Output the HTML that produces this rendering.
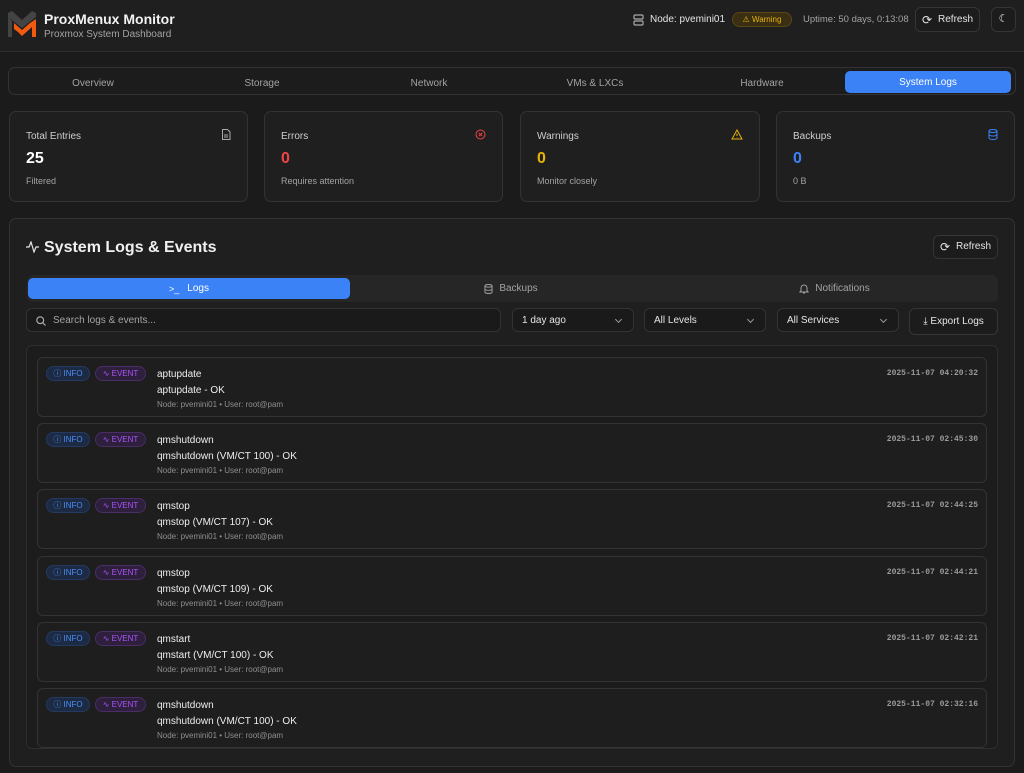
<!DOCTYPE html>
<html><head><meta charset="utf-8"><style>
*{box-sizing:border-box;margin:0;padding:0}
body{width:1024px;height:773px;overflow:hidden;background:#1b1b1b;font-family:"Liberation Sans",sans-serif;color:#e5e5e5;position:relative}
.abs{position:absolute}
.hdr{left:0;top:0;width:1024px;height:52px;background:#1f1f1f;border-bottom:1px solid #2e2e2e}
.box{border:1px solid #333;border-radius:7px;background:#1f1f1f}
.btn{border:1px solid #353535;border-radius:6px;background:#1c1c1c;font-size:10px;color:#e5e5e5;display:flex;align-items:center;justify-content:center;gap:6px;line-height:1}
.tab{font-size:10px;color:#a3a3a3;display:flex;align-items:center;justify-content:center;top:72px;height:22px}
.stat .t{position:absolute;left:16px;top:19px;font-size:10px;color:#cfcfcf}
.stat .v{position:absolute;left:16px;top:38px;font-size:16px;font-weight:bold}
.stat .s{position:absolute;left:16px;top:64px;font-size:9px;color:#a3a3a3}
.stat svg{position:absolute;right:16px;top:17px}
.sel{border:1px solid #333;border-radius:6px;background:#1a1a1a;font-size:10px;color:#e5e5e5;padding-left:9px;display:flex;align-items:center;top:308px;height:24px}
.dd:after{content:"";position:absolute;right:12px;top:8px;width:4px;height:4px;border-right:1px solid #999;border-bottom:1px solid #999;transform:rotate(45deg)}
.item{left:37px;width:950px;height:60px;border:1px solid #333;border-radius:6px;background:#1e1e1e}
.b{position:absolute;top:8px;height:15px;border-radius:8px;font-size:8px;display:flex;align-items:center;justify-content:center;gap:3px}
.bi{left:8px;width:44px;background:#1c2a44;border:1px solid #243a63;color:#4d8ef7}
.be{left:57px;width:51px;background:#2e1f3d;border:1px solid #4a2d66;color:#a855f7}
.n{position:absolute;left:119px;top:11px;font-size:10px;color:#eee}
.m{position:absolute;left:119px;top:27px;font-size:10px;color:#eee}
.u{position:absolute;left:119px;top:42px;font-size:8px;color:#8f8f8f}
.ts{position:absolute;right:8px;top:11px;font-family:"Liberation Mono",monospace;font-size:8px;color:#9a9a9a;font-weight:bold}
</style></head><body>
<div class="abs hdr"></div>
<svg class="abs" style="left:8px;top:11px" width="29" height="26" viewBox="0 0 29 26"><path d="M0 2 L4 0 L14 9 L24 0 L28 2 L28 6 L14 17 L0 6Z" fill="#444"/><path d="M0 6 L0 26 L4 26 L4 10Z" fill="#444"/><path d="M6 12 L14 19 L22 12 L28 8 L28 26 L24 26 L24 16 L14 25 L10 21 L6 18Z" fill="#f25a0f"/></svg>
<div class="abs" style="left:44px;top:11px;font-size:14px;font-weight:bold;color:#f2f2f2">ProxMenux Monitor</div>
<div class="abs" style="left:44px;top:29px;font-size:10px;color:#a3a3a3">Proxmox System Dashboard</div>
<svg class="abs" style="left:633px;top:14px" width="11" height="12" viewBox="0 0 11 12" fill="none" stroke="#aaa" stroke-width="1.2"><rect x="1" y="1" width="9" height="4" rx="1"/><rect x="1" y="7" width="9" height="4" rx="1"/></svg>
<div class="abs" style="left:650px;top:14px;font-size:10px;color:#e5e5e5;white-space:nowrap">Node: pvemini01</div>
<div class="abs" style="left:732px;top:12px;width:60px;height:15px;border-radius:8px;background:#3a2f12;border:1px solid #5a4716;color:#eab308;font-size:8px;display:flex;align-items:center;justify-content:center;gap:3px">⚠ Warning</div>
<div class="abs" style="left:803px;top:14px;font-size:9.5px;color:#a3a3a3;white-space:nowrap">Uptime: 50 days, 0:13:08</div>
<div class="abs btn" style="left:915px;top:7px;width:65px;height:25px"><span style="font-size:12px">⟳</span>Refresh</div>
<div class="abs btn" style="left:991px;top:7px;width:25px;height:25px;font-size:11px">☾</div>

<div class="abs box" style="left:8px;top:67px;width:1008px;height:28px;background:#1c1c1c"></div>
<div class="abs tab" style="left:10px;width:166px">Overview</div>
<div class="abs tab" style="left:176px;width:172px">Storage</div>
<div class="abs tab" style="left:343px;width:172px">Network</div>
<div class="abs tab" style="left:509px;width:172px">VMs &amp; LXCs</div>
<div class="abs tab" style="left:676px;width:172px">Hardware</div>
<div class="abs tab" style="left:845px;top:71px;width:166px;background:#3b82f6;color:#fff;border-radius:5px">System Logs</div>

<div class="abs box stat" style="left:9px;top:111px;width:239px;height:91px"><div class="t">Total Entries</div><div class="v" style="color:#fff">25</div><div class="s">Filtered</div><svg width="10" height="11" viewBox="0 0 10 11" fill="none" stroke="#aaa"><path d="M1.5 .5h5l2.5 2.5v7.5h-7.5z M3 6h4 M3 8h4"/></svg></div>
<div class="abs box stat" style="left:264px;top:111px;width:239px;height:91px"><div class="t">Errors</div><div class="v" style="color:#ef4444">0</div><div class="s">Requires attention</div><svg width="11" height="11" viewBox="0 0 11 11" fill="none" stroke="#ef4444"><circle cx="5.5" cy="5.5" r="4.5"/><path d="M3.8 3.8l3.4 3.4M7.2 3.8l-3.4 3.4"/></svg></div>
<div class="abs box stat" style="left:520px;top:111px;width:240px;height:91px"><div class="t">Warnings</div><div class="v" style="color:#eab308">0</div><div class="s">Monitor closely</div><svg width="12" height="11" viewBox="0 0 12 11" fill="none" stroke="#eab308"><path d="M6 1L11 10H1Z M6 4.5v2.5 M6 8.3v.3"/></svg></div>
<div class="abs box stat" style="left:776px;top:111px;width:239px;height:91px"><div class="t">Backups</div><div class="v" style="color:#3b82f6">0</div><div class="s">0 B</div><svg width="10" height="11" viewBox="0 0 10 11" fill="none" stroke="#3b82f6"><ellipse cx="5" cy="2" rx="4" ry="1.5"/><path d="M1 2v7c0 .8 1.8 1.5 4 1.5s4-.7 4-1.5V2 M1 5.5c0 .8 1.8 1.5 4 1.5s4-.7 4-1.5"/></svg></div>

<div class="abs box" style="left:9px;top:218px;width:1006px;height:549px"></div>
<svg class="abs" style="left:26px;top:241px" width="13" height="12" viewBox="0 0 13 12" fill="none" stroke="#e5e5e5" stroke-width="1.2"><path d="M0 6h3l2-5 3 10 2-5h3"/></svg>
<div class="abs" style="left:44px;top:239px;font-size:16px;font-weight:bold;color:#f0f0f0">System Logs &amp; Events</div>
<div class="abs btn" style="left:933px;top:235px;width:65px;height:24px"><span style="font-size:12px">⟳</span>Refresh</div>

<div class="abs" style="left:27px;top:275px;width:971px;height:27px;background:#262626;border-radius:6px"></div>
<div class="abs" style="left:28px;top:278px;width:322px;height:21px;background:#3b82f6;border-radius:5px;color:#fff;font-size:10px;display:flex;align-items:center;justify-content:center;gap:8px"><span style="font-size:9px">&gt;_</span>Logs</div>
<div class="abs" style="left:350px;top:278px;width:322px;height:21px;color:#a3a3a3;font-size:10px;display:flex;align-items:center;justify-content:center;gap:6px"><svg width="9" height="10" viewBox="0 0 10 11" fill="none" stroke="#a3a3a3"><ellipse cx="5" cy="2" rx="4" ry="1.5"/><path d="M1 2v7c0 .8 1.8 1.5 4 1.5s4-.7 4-1.5V2 M1 5.5c0 .8 1.8 1.5 4 1.5s4-.7 4-1.5"/></svg>Backups</div>
<div class="abs" style="left:672px;top:278px;width:325px;height:21px;color:#a3a3a3;font-size:10px;display:flex;align-items:center;justify-content:center;gap:6px"><svg width="10" height="11" viewBox="0 0 10 11" fill="none" stroke="#a3a3a3"><path d="M2 8V5a3 3 0 0 1 6 0v3l1 1H1z M4 10h2"/></svg><span>Notifications</span></div>

<div class="abs sel" style="left:26px;width:475px;padding-left:26px;color:#a3a3a3"><svg style="position:absolute;left:9px;top:7px" width="10" height="10" viewBox="0 0 10 10" fill="none" stroke="#aaa" stroke-width="1.2"><circle cx="4.2" cy="4.2" r="3.4"/><path d="M6.8 6.8L9.5 9.5"/></svg>Search logs &amp; events...</div>
<div class="abs sel dd" style="left:512px;width:122px">1 day ago</div>
<div class="abs sel dd" style="left:644px;width:122px">All Levels</div>
<div class="abs sel dd" style="left:777px;width:122px">All Services</div>
<div class="abs btn" style="left:909px;top:308px;width:89px;height:27px">⤓ Export Logs</div>

<div class="abs" style="left:26px;top:345px;width:972px;height:404px;border:1px solid #2e2e2e;border-radius:6px;overflow:hidden;background:#1c1c1c">
</div>
<div class="abs" style="left:0;top:0;width:1024px;height:748px;overflow:hidden">
<div class="abs item" style="top:357px"><div class="b bi">ⓘ INFO</div><div class="b be">∿ EVENT</div><div class="n">aptupdate</div><div class="m">aptupdate - OK</div><div class="u">Node: pvemini01 • User: root@pam</div><div class="ts">2025-11-07 04:20:32</div></div>
<div class="abs item" style="top:423px"><div class="b bi">ⓘ INFO</div><div class="b be">∿ EVENT</div><div class="n">qmshutdown</div><div class="m">qmshutdown (VM/CT 100) - OK</div><div class="u">Node: pvemini01 • User: root@pam</div><div class="ts">2025-11-07 02:45:30</div></div>
<div class="abs item" style="top:489px"><div class="b bi">ⓘ INFO</div><div class="b be">∿ EVENT</div><div class="n">qmstop</div><div class="m">qmstop (VM/CT 107) - OK</div><div class="u">Node: pvemini01 • User: root@pam</div><div class="ts">2025-11-07 02:44:25</div></div>
<div class="abs item" style="top:556px"><div class="b bi">ⓘ INFO</div><div class="b be">∿ EVENT</div><div class="n">qmstop</div><div class="m">qmstop (VM/CT 109) - OK</div><div class="u">Node: pvemini01 • User: root@pam</div><div class="ts">2025-11-07 02:44:21</div></div>
<div class="abs item" style="top:622px"><div class="b bi">ⓘ INFO</div><div class="b be">∿ EVENT</div><div class="n">qmstart</div><div class="m">qmstart (VM/CT 100) - OK</div><div class="u">Node: pvemini01 • User: root@pam</div><div class="ts">2025-11-07 02:42:21</div></div>
<div class="abs item" style="top:688px"><div class="b bi">ⓘ INFO</div><div class="b be">∿ EVENT</div><div class="n">qmshutdown</div><div class="m">qmshutdown (VM/CT 100) - OK</div><div class="u">Node: pvemini01 • User: root@pam</div><div class="ts">2025-11-07 02:32:16</div></div>
</div>
</body></html>
